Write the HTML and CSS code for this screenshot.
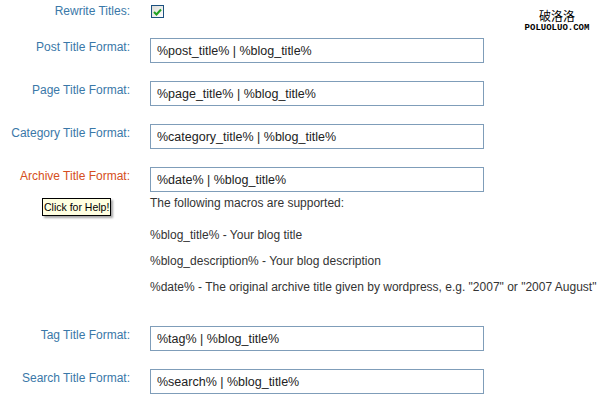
FILE: index.html
```html
<!DOCTYPE html>
<html lang="en">
<head>
  <meta charset="UTF-8" />
  <title>Title Options</title>
  <link rel="stylesheet" href="styles.css">
</head>
<body>
  <div class="marca">
    <div class="marca-cn">破洛洛</div>
    <div class="marca-en">POLUOLUO.COM</div>
  </div>

  <form class="opcoes">
    <div class="linha linha-check">
      <label>Rewrite Titles:</label>
      <div>
        <span class="check">
          <svg width="9" height="8" viewBox="0 0 9 8"><path d="M1 4 L3.5 6.5 L8 1.5" fill="none" stroke="#21a121" stroke-width="2"/></svg>
        </span>
      </div>
    </div>

    <div class="linha">
      <label>Post Title Format:</label>
      <div><input type="text" value="%post_title% | %blog_title%"></div>
    </div>

    <div class="linha">
      <label>Page Title Format:</label>
      <div><input type="text" value="%page_title% | %blog_title%"></div>
    </div>

    <div class="linha">
      <label>Category Title Format:</label>
      <div><input type="text" value="%category_title% | %blog_title%"></div>
    </div>

    <div class="linha linha-ajuda">
      <label class="ativo">Archive Title Format:</label>
      <div>
        <input type="text" value="%date% | %blog_title%">
        <p class="macros">The following macros are supported:</p>
        <p class="macro">%blog_title% - Your blog title</p>
        <p class="macro">%blog_description% - Your blog description</p>
        <p class="macro">%date% - The original archive title given by wordpress, e.g. "2007" or "2007 August"</p>
      </div>
      <!--TOOLTIP-->
      <span class="dica">Click for Help!</span>
    </div>

    <div class="linha">
      <label>Tag Title Format:</label>
      <div><input type="text" value="%tag% | %blog_title%"></div>
    </div>

    <div class="linha">
      <label>Search Title Format:</label>
      <div><input type="text" value="%search% | %blog_title%"></div>
    </div>
  </form>
</body>
</html>
```

FILE: styles.css
```css
:root {
  --azul: #3a78a8;
  --vermelho: #d54e21;
  --texto: #333;
  --borda: #7f9db9;
}

* {
  margin: 0;
  padding: 0;
  box-sizing: border-box;
}

body {
  font-family: 'Liberation Sans', Arial, sans-serif;
  background-color: #fff;
  color: var(--texto);
  width: 603px;
  height: 400px;
  overflow: hidden;
  position: relative;
}

.marca {
  position: absolute;
  top: 7px;
  left: 522px;
  width: 70px;
  text-align: center;
  color: #000;
}

.marca-cn {
  font-family: 'Noto Sans CJK SC', sans-serif;
  font-size: 12px;
  line-height: 17px;
}

.marca-en {
  font-family: 'Liberation Mono', monospace;
  font-weight: bold;
  font-size: 9px;
  line-height: 9px;
}

.opcoes {
  padding-top: 3px;
}

.linha {
  display: grid;
  grid-template-columns: 130px 334px;
  column-gap: 20px;
  margin-bottom: 18px;
  position: relative;
}

.linha label {
  text-align: right;
  font-size: 12px;
  line-height: 16px;
  padding-top: 1px;
  color: var(--azul);
}

.linha label.ativo {
  color: var(--vermelho);
}

.linha-check {
  margin-bottom: 19px;
}

.linha-check label {
  padding-top: 0;
}

.check {
  display: flex;
  align-items: center;
  justify-content: center;
  width: 13px;
  height: 13px;
  margin: 2px 0 0 1px;
  border: 1px solid #1c5180;
  background: linear-gradient(135deg, #dcdcd7, #fff);
}

input[type="text"] {
  display: block;
  width: 334px;
  height: 25px;
  border: 1px solid var(--borda);
  padding: 0 6px;
  font-family: 'Liberation Sans', Arial, sans-serif;
  font-size: 12.5px;
  color: #222;
  background: #fff;
}

.macros {
  font-size: 12px;
  line-height: 26px;
  margin-top: -2px;
  margin-bottom: 6px;
}

.macro {
  font-size: 12px;
  line-height: 26px;
  white-space: nowrap;
}

.linha-ajuda {
  margin-bottom: 26px;
}

.dica {
  position: absolute;
  left: 42px;
  top: 31px;
  padding: 1px 1px;
  font-size: 10.5px;
  line-height: 14px;
  color: #000;
  background-color: #ffffe1;
  border: 1px solid #000;
  box-shadow: 2px 2px 2px rgba(0, 0, 0, 0.35);
}
```
